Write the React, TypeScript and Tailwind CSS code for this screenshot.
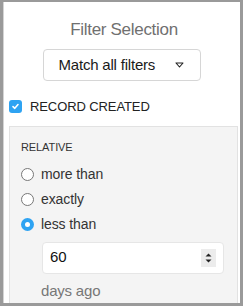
import { useState } from 'react';

const OPTIONS = ['more than', 'exactly', 'less than'];

export default function App() {
  const [mode, setMode] = useState('less than');
  const [checked, setChecked] = useState(true);
  const [days, setDays] = useState('60');

  return (
    <div
      className="w-[243px] h-[306px] overflow-hidden bg-[#9a9a9a] pl-[3px] pr-[3px] pt-[2px] pb-[3px]"
      style={{ fontFamily: '"Liberation Sans", Arial, sans-serif' }}
    >
      <div className="h-full bg-white border-l border-[#d4d4d4] pl-[5px] pr-[1px] flex flex-col">
        <h2 className="mt-[18px] text-center text-[17px] leading-[20px] font-light text-[#707070] tracking-[-0.3px]">
          Filter Selection
        </h2>

        {/* Match mode dropdown */}
        <div className="mt-[9px] flex justify-center pr-[5px]">
          <button
            type="button"
            className="w-[158px] h-[32px] border border-[#d6d6d6] rounded-[4px] bg-white flex items-center pl-[15px] pr-[16px] justify-between"
          >
            <span className="text-[15px] text-[#1a1a1a] font-medium tracking-[-0.2px]">Match all filters</span>
            <svg width="9" height="6" viewBox="0 0 9 6">
              <path d="M1 1 H8 L4.5 5 Z" fill="none" stroke="#222" strokeWidth="1.1" strokeLinejoin="round" />
            </svg>
          </button>
        </div>

        {/* Record created */}
        <label className="mt-[16px] flex items-center gap-[8px]">
          <span
            onClick={() => setChecked(!checked)}
            className={`w-[13px] h-[13px] rounded-[3px] flex items-center justify-center ${checked ? 'bg-[#2ea3f2]' : 'bg-white border border-[#aaa]'}`}
          >
            {checked && (
              <svg width="9" height="9" viewBox="0 0 9 9">
                <path d="M2 4.6 L3.8 6.3 L7 2.6" fill="none" stroke="white" strokeWidth="1.6" strokeLinecap="round" strokeLinejoin="round" />
              </svg>
            )}
          </span>
          <span className="text-[13px] text-[#222] tracking-[-0.1px]">RECORD CREATED</span>
        </label>

        {/* Relative panel */}
        <div className="mt-[9px] flex-1 mr-[1px] bg-[#f4f4f4] border border-[#e2e2e2] border-b-0 pl-[11px] pr-[12px] pt-[13px]">
          <div className="text-[11px] leading-[14px] text-[#333] tracking-[-0.1px]">RELATIVE</div>

          <div className="mt-[14px] flex flex-col gap-[12px]">
            {OPTIONS.map((opt) => (
              <label key={opt} className="flex items-center gap-[7px] h-[13px]" onClick={() => setMode(opt)}>
                {mode === opt ? (
                  <span className="w-[13px] h-[13px] rounded-full bg-[#2ea3f2] flex items-center justify-center">
                    <span className="w-[5px] h-[5px] rounded-full bg-white" />
                  </span>
                ) : (
                  <span className="w-[13px] h-[13px] rounded-full bg-white border border-[#777]" />
                )}
                <span className="text-[14px] text-[#333] tracking-[-0.1px]">{opt}</span>
              </label>
            ))}
          </div>

          <div className="mt-[11px] ml-[21px] w-[182px] h-[32px] bg-white border border-[#e6e6e6] rounded-[4px] flex items-center pl-[7px] pr-[7px]">
            <input
              value={days}
              onChange={(e) => setDays(e.target.value)}
              className="flex-1 min-w-0 outline-none text-[15px] text-[#111] bg-transparent"
            />
            <div className="w-[15px] h-[18px] bg-[#ececec] flex flex-col items-center justify-center gap-[2px]">
              <svg width="7" height="4" viewBox="0 0 7 4"><path d="M0.5 3.5 L3.5 0.5 L6.5 3.5 Z" fill="#222" /></svg>
              <svg width="7" height="4" viewBox="0 0 7 4"><path d="M0.5 0.5 L3.5 3.5 L6.5 0.5 Z" fill="#222" /></svg>
            </div>
          </div>

          <div className="mt-[6px] ml-[20px] text-[15px] text-[#777] tracking-[-0.2px]">days ago</div>
        </div>
      </div>
    </div>
  );
}
